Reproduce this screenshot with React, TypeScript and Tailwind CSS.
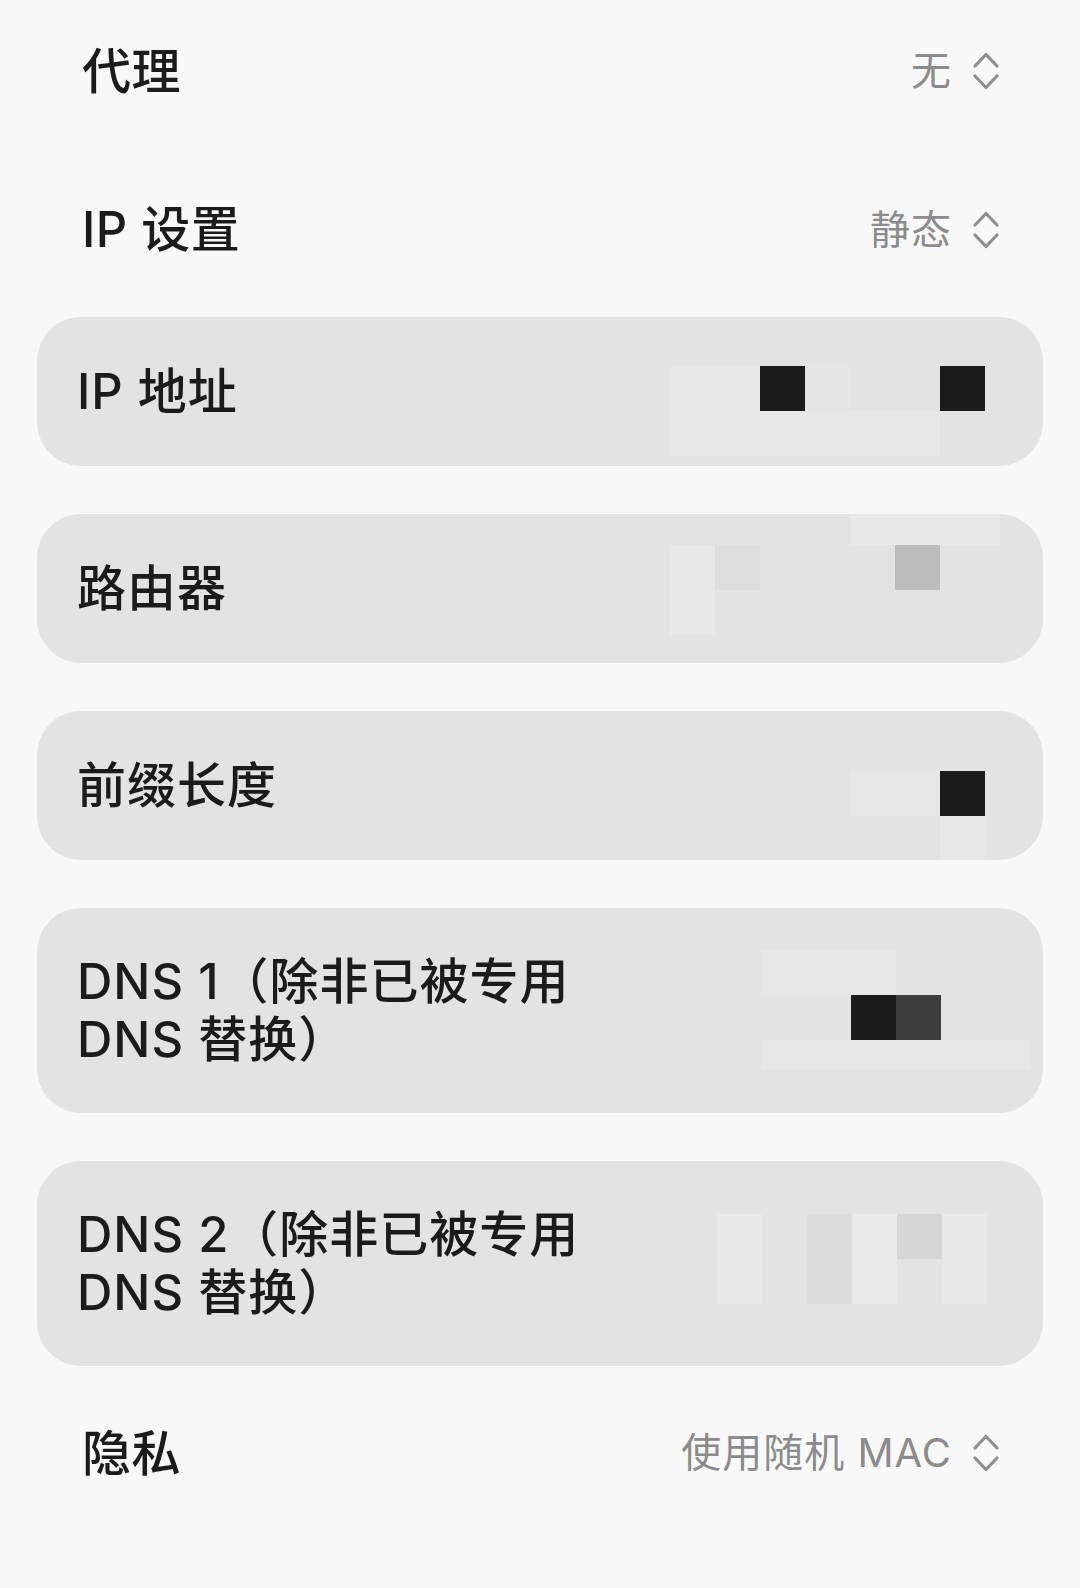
import type { ReactNode } from 'react';

const font = { fontFamily: 'Inter, "Noto Sans CJK SC", sans-serif' };

type Block = { x: number; y: number; w?: number; h?: number; c: string };

function UpDown() {
  return (
    <svg width="28" height="42" viewBox="0 0 28 42" fill="none" className="shrink-0">
      <path d="M3 16 L14 4.5 L25 16" stroke="#8e8e8e" strokeWidth="3.2" strokeLinecap="round" strokeLinejoin="round" />
      <path d="M3 26 L14 37.5 L25 26" stroke="#8e8e8e" strokeWidth="3.2" strokeLinecap="round" strokeLinejoin="round" />
    </svg>
  );
}

function SelectRow({ label, value, className }: { label: string; value: string; className: string }) {
  return (
    <div className={`flex items-center justify-between pl-[82px] pr-[80px] ${className}`}>
      <span className="text-[49px] font-medium text-[#1b1b1b] leading-none tracking-[0.5px]">{label}</span>
      <div className="flex items-center gap-[20px]">
        <span className="text-[40px] text-[#8b8b8b] leading-none tracking-[1px]">{value}</span>
        <UpDown />
      </div>
    </div>
  );
}

// pixelated cover over the field values
function Mosaic({ blocks }: { blocks: Block[] }) {
  return (
    <>
      {blocks.map((b, i) => (
        <div
          key={i}
          className="absolute"
          style={{ left: b.x, top: b.y, width: b.w ?? 45, height: b.h ?? 45, background: b.c }}
        />
      ))}
    </>
  );
}

function Field({ children, tall, blocks }: { children: ReactNode; tall?: boolean; blocks: Block[] }) {
  return (
    <div
      className={`relative mx-[37px] flex items-center rounded-[44px] bg-[#e3e3e3] pl-[40px] overflow-hidden ${
        tall ? 'h-[205px]' : 'h-[149px]'
      }`}
    >
      <div className="text-[49px] font-medium text-[#1b1b1b] leading-[58px] tracking-[1px]">{children}</div>
      <Mosaic blocks={blocks} />
    </div>
  );
}

export default function App() {
  return (
    <div className="min-h-[1588px] w-[1080px] bg-[#f8f8f8]" style={font}>
      <SelectRow label="代理" value="无" className="h-[142px]" />
      <SelectRow label="IP 设置" value="静态" className="h-[175px]" />

      <div className="flex flex-col gap-[48px]">
        <Field
          blocks={[
            { x: 633, y: 49, w: 90, h: 90, c: '#e6e6e6' },
            { x: 723, y: 94, w: 180, h: 45, c: '#e8e8e8' },
            { x: 768, y: 49, w: 45, h: 45, c: '#e5e5e5' },
            { x: 723, y: 49, c: '#1b1b1b' },
            { x: 903, y: 49, c: '#1b1b1b' },
          ]}
        >
          IP 地址
        </Field>
        <Field
          blocks={[
            { x: 633, y: 31, w: 45, h: 90, c: '#e8e8e8' },
            { x: 678, y: 31, w: 45, h: 45, c: '#dedede' },
            { x: 813, y: 0, w: 150, h: 31, c: '#e8e8e8' },
            { x: 858, y: 31, c: '#bcbcbc' },
          ]}
        >
          路由器
        </Field>
        <Field
          blocks={[
            { x: 813, y: 60, w: 90, h: 45, c: '#e6e6e6' },
            { x: 903, y: 105, w: 45, h: 45, c: '#e7e7e7' },
            { x: 903, y: 60, c: '#1b1b1b' },
          ]}
        >
          前缀长度
        </Field>
        <Field
          tall
          blocks={[
            { x: 724, y: 42, w: 135, h: 45, c: '#e6e6e6' },
            { x: 724, y: 132, w: 270, h: 30, c: '#e6e6e6' },
            { x: 814, y: 87, c: '#1c1c1c' },
            { x: 859, y: 87, c: '#3c3c3c' },
          ]}
        >
          DNS 1（除非已被专用
          <br />
          DNS 替换）
        </Field>
        <Field
          tall
          blocks={[
            { x: 680, y: 53, w: 45, h: 90, c: '#e8e8e8' },
            { x: 770, y: 53, w: 45, h: 90, c: '#dcdcdc' },
            { x: 815, y: 53, w: 45, h: 90, c: '#e9e9e9' },
            { x: 860, y: 53, c: '#d6d6d6' },
            { x: 905, y: 53, w: 45, h: 90, c: '#e8e8e8' },
          ]}
        >
          DNS 2（除非已被专用
          <br />
          DNS 替换）
        </Field>
      </div>

      <SelectRow label="隐私" value="使用随机 MAC" className="h-[174px]" />
    </div>
  );
}
